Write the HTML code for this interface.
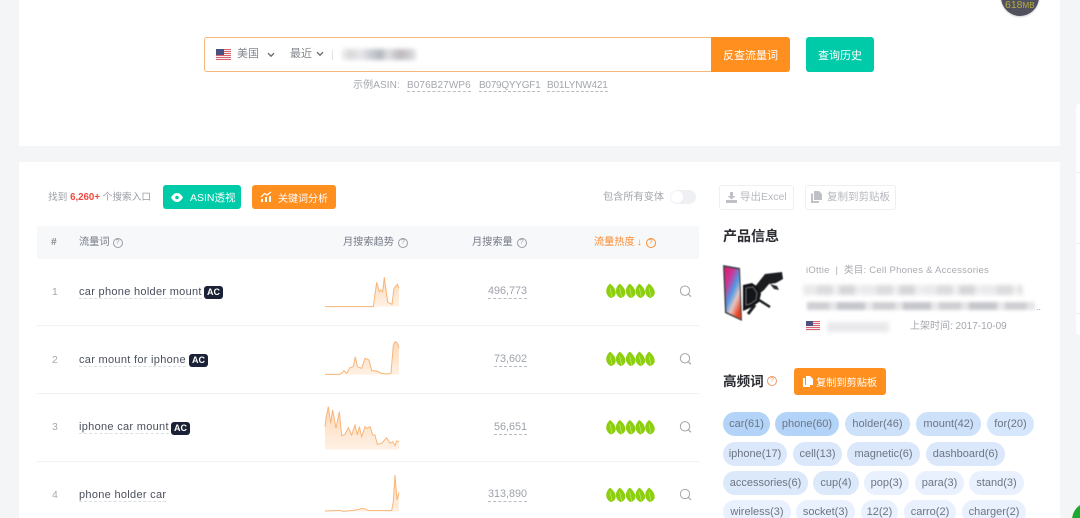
<!DOCTYPE html>
<html lang="zh"><head><meta charset="utf-8"><title>反查流量词</title>
<style>
html,body{margin:0;padding:0;width:1080px;height:518px;overflow:hidden;background:#f4f5f7}
body{position:relative;font-family:"Liberation Sans","Noto Sans CJK SC",sans-serif;color:#666;filter:blur(.3px)}
.a{position:absolute;white-space:nowrap;line-height:1}
.btn{position:absolute;border-radius:3px;color:#fff;display:flex;align-items:center;justify-content:center;white-space:nowrap}
.or{background:#ff8f1f}.gr{background:#00cba8}
.kw{position:absolute;left:79px;font-size:11px;letter-spacing:.3px;color:#4a4f5c;line-height:12px;border-bottom:1px dashed #dcdfe4;white-space:nowrap}
.ac{display:block;background:#1b2136;color:#fff;border-radius:3px;font-size:9px;font-weight:bold;line-height:13px;width:19px;text-align:center}
.num{position:absolute;right:553px;font-size:10.8px;color:#9ea2ab;line-height:13px;border-bottom:1px dashed #b8bcc4;white-space:nowrap}
.idx{position:absolute;left:52px;font-size:10.5px;color:#a5a8ae;line-height:12px}
.th{position:absolute;top:236px;font-size:10.2px;color:#757a85;line-height:13px;white-space:nowrap}
.q{display:inline-block;width:8px;height:8px;border:1px solid #999da5;border-radius:50%;font-size:7px;line-height:8px;text-align:center;margin-left:4px;vertical-align:1px;color:#999da5}
.tag{position:absolute;height:24px;line-height:24px;border-radius:12px;font-size:11px;color:#6c7583;text-align:center;white-space:nowrap}
.bl{position:absolute;filter:blur(2px)}
.line{position:absolute;left:37px;width:662px;height:1px;background:#f1f2f4}
.ex{font-size:10px;color:#a3a6ac;line-height:11px;border-bottom:1px dashed #b9bcc2}
</style></head><body>

<div style="position:absolute;left:19px;top:0;width:1041px;height:146px;background:#fff"></div>
<div style="position:absolute;left:19px;top:162px;width:1041px;height:356px;background:#fff"></div>
<div style="position:absolute;left:1076px;top:104px;width:4px;height:231px;background:#fff;border-radius:3px 0 0 3px"></div>
<div style="position:absolute;left:1076px;top:172px;width:4px;height:1px;background:#eee"></div>
<div style="position:absolute;left:1076px;top:243px;width:4px;height:1px;background:#eee"></div>
<div style="position:absolute;left:1076px;top:313px;width:4px;height:1px;background:#eee"></div>
<div style="position:absolute;left:1072px;top:502px;width:36px;height:36px;border-radius:50%;background:#1fa82f"></div>

<!-- memory badge -->
<div style="position:absolute;left:1001px;top:-22px;width:38px;height:38px;border-radius:50%;background:#50515c;box-shadow:0 1px 2px rgba(0,0,0,.2)"></div>
<div class="a" style="left:1005px;top:0;font-size:10.5px;color:#b9ad3f;line-height:10px">618<span style="font-size:8px">MB</span></div>

<!-- search -->
<div style="position:absolute;left:204px;top:37px;width:507px;height:33px;border:1px solid #f6b87a;border-right:0;border-radius:3px 0 0 3px;background:#fff"></div>
<svg style="position:absolute;left:216px;top:49px" width="15" height="11" viewBox="0 0 15 11"><rect width="15" height="11" fill="#f6eef0"/><g fill="#d9636c"><rect y="0" width="15" height="1"/><rect y="2" width="15" height="1"/><rect y="4" width="15" height="1"/><rect y="6" width="15" height="1"/><rect y="8" width="15" height="1"/><rect y="10" width="15" height="1"/></g><rect width="8" height="6" fill="#4a5080"/></svg>
<div class="a" style="left:237px;top:48px;font-size:11px;color:#83868d;line-height:13px">美国</div>
<svg style="position:absolute;left:267px;top:52px" width="8" height="6" viewBox="0 0 8 6"><path d="M1 1.200 4 4.200 7 1.200" fill="none" stroke="#666" stroke-width="1.300"/></svg>
<div class="a" style="left:290px;top:48px;font-size:11px;color:#83868d;line-height:13px">最近</div>
<svg style="position:absolute;left:316px;top:51px" width="8" height="6" viewBox="0 0 8 6"><path d="M1 1.200 4 4.200 7 1.200" fill="none" stroke="#666" stroke-width="1.300"/></svg>
<div style="position:absolute;left:332px;top:50px;width:1px;height:10px;background:#e2e3e6"></div>
<div class="bl" style="left:342px;top:49px;width:74px;height:11px;background:linear-gradient(90deg,#ececee 0,#d8d9dc 12%,#e8e8ea 25%,#c6cbd4 40%,#b3b5bb 52%,#e0e0e3 62%,#bdb8bd 78%,#cfcfd2 92%,#e5e5e5 100%)"></div>
<div class="btn or" style="left:711px;top:37px;width:79px;height:35px;border-radius:0 3px 3px 0;font-size:11px">反查流量词</div>
<div class="btn gr" style="left:806px;top:37px;width:68px;height:35px;font-size:11px">查询历史</div>

<div class="a" style="left:353px;top:80px;font-size:10px;color:#a3a6ac;line-height:12px;letter-spacing:.1px">示例ASIN:</div>
<div class="a ex" style="left:407px;top:80px;letter-spacing:.1px">B076B27WP6</div>
<div class="a ex" style="left:479px;top:80px;letter-spacing:-.25px">B079QYYGF1</div>
<div class="a ex" style="left:547px;top:80px;letter-spacing:-.2px">B01LYNW421</div>

<!-- toolbar -->
<div class="a" style="left:48px;top:192px;font-size:9.7px;color:#9a9da4;line-height:12px">找到 <b style="color:#f0483e">6,260+</b> 个搜索入口</div>
<div class="btn gr" style="left:163px;top:185px;width:78px;height:24px;font-size:10.5px;justify-content:flex-start">
<svg style="margin:0 7px 0 8px" width="12" height="9" viewBox="0 0 12 9"><path d="M0 4.500C2 1.200 4 0 6 0s4 1.200 6 4.500C10 7.800 8 9 6 9S2 7.800 0 4.500Z" fill="#fff"/><circle cx="6" cy="4.500" r="1.800" fill="#00cba8"/></svg>ASIN透视</div>
<div class="btn or" style="left:252px;top:185px;width:84px;height:24px;font-size:10px;justify-content:flex-start">
<svg style="margin:0 6px 0 8px" width="12" height="12" viewBox="0 0 12 12"><path d="M1 6 4.500 2.500 7 4 11 1" fill="none" stroke="#fff" stroke-width="1.200"/><path d="M1 8h2v3H1zM5 6h2v5H5zM9 5h2v6H9z" fill="#fff"/></svg>关键词分析</div>

<div class="a" style="left:603px;top:191px;font-size:10.2px;color:#a3a6ac;line-height:13px">包含所有变体</div>
<div style="position:absolute;left:670px;top:190px;width:26px;height:14px;border-radius:7px;background:#eef0f4"></div>
<div style="position:absolute;left:671px;top:191px;width:12px;height:12px;border-radius:50%;background:#fff"></div>

<div style="position:absolute;left:719px;top:185px;width:73px;height:23px;border:1px solid #eeeff1;border-radius:3px"></div>
<svg style="position:absolute;left:726px;top:192px" width="11" height="11" viewBox="0 0 11 11"><path d="M4 0h3v4h2.500L5.500 7.500 1.500 4H4zM0 8h11v3H0z" fill="#bfc1c6"/></svg>
<div class="a" style="left:740px;top:191px;font-size:10.5px;color:#b6b8bd;line-height:13px">导出Excel</div>
<div style="position:absolute;left:805px;top:185px;width:89px;height:23px;border:1px solid #eeeff1;border-radius:3px"></div>
<svg style="position:absolute;left:811px;top:191px" width="11" height="12" viewBox="0 0 11 12"><path d="M3 0h5l3 3v6H3z" fill="#bfc1c6"/><path d="M0 2.500h2V10h6v2H0z" fill="#bfc1c6"/></svg>
<div class="a" style="left:827px;top:191px;font-size:10.5px;color:#b6b8bd;line-height:13px">复制到剪贴板</div>

<!-- table head -->
<div style="position:absolute;left:37px;top:226px;width:662px;height:33px;background:#f7f8fa"></div>
<div class="th" style="left:51px;font-weight:bold;color:#888">#</div>
<div class="th" style="left:79px">流量词<span class="q" style="margin-left:3px">?</span></div>
<div class="th" style="left:343px">月搜索趋势<span class="q">?</span></div>
<div class="th" style="left:472px">月搜索量<span class="q">?</span></div>
<div class="th" style="left:594px;color:#f98d34">流量热度<span style="font-weight:bold;font-size:10px;margin-left:2px">↓</span><span class="q" style="border-color:#f98d34;color:#f98d34">?</span></div>

<div class="line" style="top:325px"></div>
<div class="line" style="top:393px"></div>
<div class="line" style="top:461px"></div>

<div class="idx" style="top:286px">1</div>
<div class="kw" style="top:286px">car phone holder mount</div><div class="a" style="left:204px;top:286px"><span class="ac">AC</span></div>
<div class="idx" style="top:354px">2</div>
<div class="kw" style="top:354px">car mount for iphone</div><div class="a" style="left:189px;top:354px"><span class="ac">AC</span></div>
<div class="idx" style="top:421px">3</div>
<div class="kw" style="top:421px">iphone car mount</div><div class="a" style="left:171px;top:422px"><span class="ac">AC</span></div>
<div class="idx" style="top:489px">4</div>
<div class="kw" style="top:489px">phone holder car</div>

<div class="num" style="top:285px">496,773</div>
<div class="num" style="top:353px">73,602</div>
<div class="num" style="top:421px">56,651</div>
<div class="num" style="top:488px">313,890</div>

<!-- sparklines + leaves + search icons -->
<svg style="position:absolute;left:320px;top:225px" width="390" height="293" viewBox="0 0 1170 879">
<defs>
<g id="leaf"><path d="M-3 -22C-15 -12 -17 3 -11 12 -7 18 -2 21 1 21 6 20 12 16 14 8 16 -2 8 -14 -3 -22Z" fill="#8ccf0e"/><path d="M-3 -10 3 19" stroke="#d9f09a" stroke-width="1.500" fill="none"/></g>
<g id="leaves"><use href="#leaf" x="873"/><use href="#leaf" x="902"/><use href="#leaf" x="932"/><use href="#leaf" x="961"/><use href="#leaf" x="990"/></g>
<g id="mag"><circle cx="1095" cy="0" r="14" fill="none" stroke="#a3a6ad" stroke-width="3"/><path d="M1105 10 1113 18" stroke="#a3a6ad" stroke-width="3.500"/></g>
<linearGradient id="f" x1="0" y1="0" x2="0" y2="1"><stop offset="0" stop-color="#fcd9b8"/><stop offset="1" stop-color="#fff1e4"/></linearGradient>
</defs>
<g fill="url(#f)" stroke="none">
<path d="M15 245 160 245 170 172 178 200 183 195 188 200 193 157 203 232 216 238 222 190 232 178 237 190V245Z"/>
<path d="M15 448 50 448 62 447 72 437 80 445 90 428 100 425 106 395 112 425 125 430 135 400 147 405 155 437 170 438 185 445 200 447 213 445 220 360 226 350 232 355 237 368V449H15Z"/>
<path d="M15 605 18 580 25 545 32 595 38 555 48 610 58 560 65 632 75 628 85 608 95 630 105 600 112 630 118 605 125 635 135 605 140 610 150 605 158 630 165 630 172 658 185 655 200 638 210 655 218 650 225 662 230 648 237 650V673H15Z"/>
<path d="M15 858 60 856 70 859 100 856 130 850 145 856 215 857 220 830 225 750 231 825 237 802V860H15Z"/>
</g>
<g fill="none" stroke="#f8b578" stroke-width="3">
<path d="M15 245 160 245 170 172 178 200 183 195 188 200 193 157 203 232 216 238 222 190 232 178 237 190"/>
<path d="M15 448 50 448 62 447 72 437 80 445 90 428 100 425 106 395 112 425 125 430 135 400 147 405 155 437 170 438 185 445 200 447 213 445 220 360 226 350 232 355 237 368"/>
<path d="M15 605 18 580 25 545 32 595 38 555 48 610 58 560 65 632 75 628 85 608 95 630 105 600 112 630 118 605 125 635 135 605 140 610 150 605 158 630 165 630 172 658 185 655 200 638 210 655 218 650 225 662 230 648 237 650"/>
<path d="M15 858 60 856 70 859 100 856 130 850 145 856 215 857 220 830 225 750 231 825 237 802"/>
</g>
<use href="#leaves" y="198"/><use href="#leaves" y="402"/><use href="#leaves" y="607"/><use href="#leaves" y="810"/>
<use href="#mag" y="197"/><use href="#mag" y="400"/><use href="#mag" y="604"/><use href="#mag" y="807"/>
</svg>

<!-- product info -->
<div class="a" style="left:723px;top:228px;font-size:14px;font-weight:bold;color:#2b2d33;line-height:16px">产品信息</div>
<svg style="position:absolute;left:722px;top:262px;filter:blur(.5px)" width="62" height="64" viewBox="0 0 62 64">
<defs><linearGradient id="ph" x1="0" y1="0" x2=".7" y2="1"><stop offset="0" stop-color="#e5146a"/><stop offset=".3" stop-color="#c83a9a"/><stop offset=".55" stop-color="#4f9be6"/><stop offset=".75" stop-color="#e6c4c0"/><stop offset="1" stop-color="#e8401f"/></linearGradient></defs>
<path d="M43 12 60 10 61 17 54 21 47 22 42 28 36 33 32 26Z" fill="#1c1d20"/>
<path d="M48 22 55 24 57 28 52 27Z" fill="#2a2b2f"/>
<path d="M21 23 30 21 36 25 39 32 37 40 30 45 21 49Z" fill="#141518"/>
<path d="M24 26 31 25 35 31 34 38 28 42 24 43Z" fill="none" stroke="#6d6e74" stroke-width="1"/>
<path d="M37 38 48 45" stroke="#1c1d20" stroke-width="2.500"/>
<path d="M33 43 26 52" stroke="#1c1d20" stroke-width="3"/>
<path d="M1 3 18 6 20 59 3 51Z" fill="#44454a"/>
<path d="M2.500 5 17 7.500 18.800 57 4.500 50Z" fill="url(#ph)"/>
</svg>
<div class="a" style="left:806px;top:265px;font-size:9.500px;color:#a8abb1;line-height:12px;letter-spacing:.25px">iOttie &nbsp;|&nbsp; 类目: Cell Phones &amp; Accessories</div>
<div class="bl" style="left:803px;top:285px;width:219px;height:10px;background:repeating-linear-gradient(90deg,#eaeaec 0 14px,#dcdcde 14px 30px,#f1f1f2 30px 36px,#d6d6d9 36px 52px,#eeeef0 52px 60px);"></div>
<div class="bl" style="left:807px;top:302px;width:228px;height:8px;filter:blur(1.500px);background:repeating-linear-gradient(90deg,#d0d0d4 0 22px,#e5e5e7 22px 30px,#c6c7cc 30px 58px,#e8e8ea 58px 66px)"></div>
<div class="a" style="left:1036px;top:302px;font-size:9px;color:#999;line-height:10px">..</div>
<svg style="position:absolute;left:806px;top:321px" width="14" height="10" viewBox="0 0 14 10"><rect width="14" height="10" fill="#f6eef0"/><g fill="#d9636c"><rect y="0" width="14" height="1"/><rect y="2" width="14" height="1"/><rect y="4" width="14" height="1"/><rect y="6" width="14" height="1"/><rect y="8" width="14" height="1"/></g><rect width="7" height="5" fill="#4a5080"/></svg>
<div class="bl" style="left:827px;top:322px;width:62px;height:10px;background:#e9e9ec"></div>
<div class="a" style="left:910px;top:321px;font-size:10px;color:#a3a6ac;line-height:12px">上架时间: 2017-10-09</div>

<!-- high frequency -->
<div class="a" style="left:723px;top:374px;font-size:13.600px;font-weight:bold;color:#2b2d33;line-height:16px">高频词</div>
<div class="a q" style="left:767px;top:376px;margin:0;border-color:#f59a66;color:#f59a66;line-height:8px">?</div>
<div class="btn or" style="left:794px;top:368px;width:92px;height:27px;font-size:10.200px;justify-content:flex-start">
<svg style="margin:0 3px 0 9px" width="10" height="11" viewBox="0 0 10 11"><path d="M3 0h4l3 3v6H3z" fill="#fff"/><path d="M0 2h2v7h5v2H0z" fill="#fff"/></svg>复制到剪贴板</div>

<div class="tag" style="left:723px;top:412px;width:47px;background:#b3d4f8">car(61)</div>
<div class="tag" style="left:775px;top:412px;width:64px;background:#b3d4f8">phone(60)</div>
<div class="tag" style="left:845px;top:412px;width:65px;background:#cde1fb">holder(46)</div>
<div class="tag" style="left:916px;top:412px;width:65px;background:#cde1fb">mount(42)</div>
<div class="tag" style="left:987px;top:412px;width:47px;background:#d6e6fc">for(20)</div>
<div class="tag" style="left:723px;top:442px;width:64px;background:#dbe8fb">iphone(17)</div>
<div class="tag" style="left:793px;top:442px;width:49px;background:#dbe8fb">cell(13)</div>
<div class="tag" style="left:847px;top:442px;width:73px;background:#dbe8fb">magnetic(6)</div>
<div class="tag" style="left:926px;top:442px;width:79px;background:#dbe8fb">dashboard(6)</div>
<div class="tag" style="left:723px;top:471px;width:85px;background:#dce9fb">accessories(6)</div>
<div class="tag" style="left:813px;top:471px;width:46px;background:#dce9fb">cup(4)</div>
<div class="tag" style="left:864px;top:471px;width:45px;background:#e8f1fd">pop(3)</div>
<div class="tag" style="left:915px;top:471px;width:49px;background:#e8f1fd">para(3)</div>
<div class="tag" style="left:969px;top:471px;width:55px;background:#e8f1fd">stand(3)</div>
<div class="tag" style="left:723px;top:500px;width:68px;background:#e8f1fd">wireless(3)</div>
<div class="tag" style="left:796px;top:500px;width:59px;background:#e8f1fd">socket(3)</div>
<div class="tag" style="left:861px;top:500px;width:37px;background:#e8f1fd">12(2)</div>
<div class="tag" style="left:904px;top:500px;width:52px;background:#e8f1fd">carro(2)</div>
<div class="tag" style="left:962px;top:500px;width:64px;background:#e8f1fd">charger(2)</div>
</body></html>
